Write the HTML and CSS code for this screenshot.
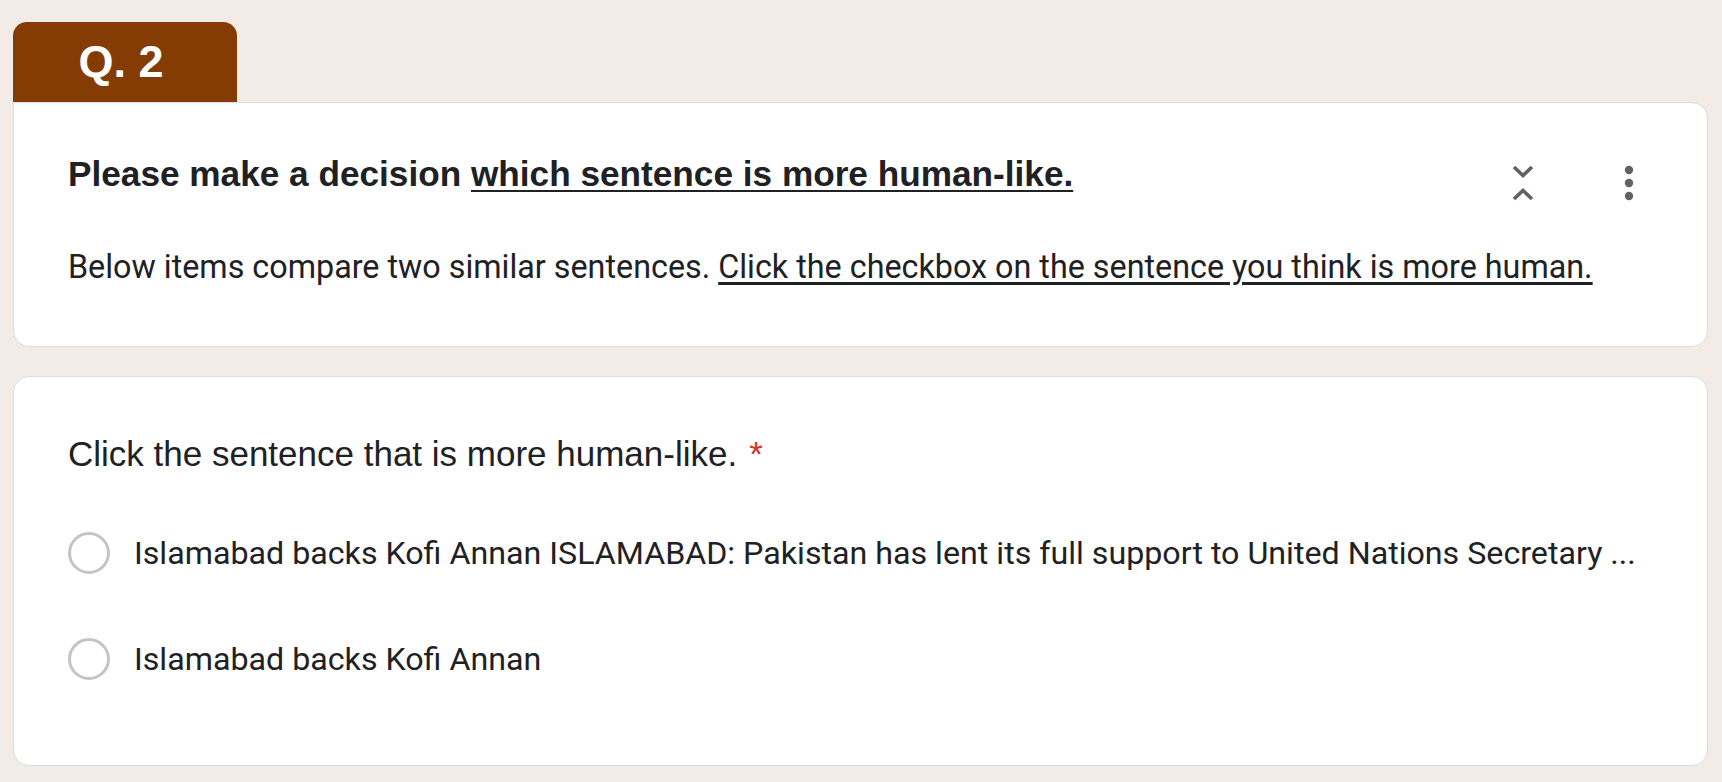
FILE: index.html
```html
<!DOCTYPE html>
<html lang="en">
<head>
<meta charset="UTF-8">
<meta name="viewport" content="width=device-width, initial-scale=1.0">
<title>Q. 2</title>
<link rel="stylesheet" href="styles.css">
</head>
<body>

<div id="page">
    <div class="tab">Q. 2</div>

    <div class="card head_card">
        <div class="head_row">
            <h1 class="title">Please make a decision <u>which sentence is more human-like.</u></h1>
            <div class="icons">
                <!-- collapse -->
                <svg class="icon" width="40" height="40" viewBox="0 0 40 40">
                    <polyline points="11,4 20,12.5 29,4" fill="none" stroke="#5f6368" stroke-width="3.6" />
                    <polyline points="11,36 20,27.5 29,36" fill="none" stroke="#5f6368" stroke-width="3.6" />
                </svg>
                <!-- more -->
                <svg class="icon" width="40" height="40" viewBox="0 0 40 40">
                    <circle cx="20" cy="7" r="4.2" fill="#5f6368" />
                    <circle cx="20" cy="20" r="4.2" fill="#5f6368" />
                    <circle cx="20" cy="33" r="4.2" fill="#5f6368" />
                </svg>
            </div>
        </div>
        <p class="desc">Below items compare two similar sentences. <u>Click the checkbox on the sentence you think is more human.</u></p>
    </div>

    <div class="card question_card">
        <div class="question">Click the sentence that is more human-like.<span class="req">*</span></div>
        <ul class="options">
            <li><span class="radio"></span>Islamabad backs Kofi Annan ISLAMABAD: Pakistan has lent its full support to United Nations Secretary ...</li>
            <li><span class="radio"></span>Islamabad backs Kofi Annan</li>
        </ul>
    </div>
</div>

</body>
</html>
```

FILE: styles.css
```css
body {
    margin: 0;
    background-color: #f2ebe6;
    color: #202124;
}
#page {
    padding: 22px 14px 19px 13px;
}
.tab {
    width: 224px;
    height: 80px;
    box-sizing: border-box;
    padding-right: 8px;
    background-color: #843c04;
    border-radius: 14px 14px 0 0;
    color: #fff;
    font-family: "Liberation Sans", Arial, sans-serif;
    font-weight: bold;
    font-size: 45px;
    display: flex;
    align-items: center;
    justify-content: center;
}
.card {
    background-color: #fff;
    border: 1px solid #dadce0;
    border-radius: 16px;
}
.head_card {
    border-top-left-radius: 0;
    padding: 51px 58px 59px 54px;
}
.head_row {
    display: flex;
    align-items: flex-start;
}
.title {
    flex: 1;
    margin: 0;
    font-family: "Liberation Sans", Arial, sans-serif;
    font-weight: bold;
    font-size: 35.2px;
    line-height: 40px;
}
.title u {
    text-decoration-thickness: 2px;
    text-underline-offset: 4px;
}
.icons {
    display: flex;
    gap: 66px;
    margin-top: 9px;
}
.desc {
    margin: 44px 0 0 0;
    font-family: Roboto, "Noto Sans", sans-serif;
    font-size: 32.3px;
    line-height: 40px;
}
.desc u {
    text-underline-offset: 4px;
}
.question_card {
    margin-top: 29px;
    padding: 57px 54px 76px 54px;
}
.question {
    font-family: "Liberation Sans", Arial, sans-serif;
    font-size: 35px;
    line-height: 40px;
}
.req {
    color: #d93025;
    padding-left: 12px;
}
.options {
    list-style: none;
    margin: 49px 0 0 0;
    padding: 0;
    display: flex;
    flex-direction: column;
    gap: 46px;
}
.options li {
    height: 60px;
    display: flex;
    align-items: center;
    font-family: Roboto, "Noto Sans", sans-serif;
    font-size: 32.2px;
    line-height: 40px;
}
.radio {
    width: 36px;
    height: 36px;
    border: 3px solid #c4c4c4;
    border-radius: 50%;
    margin-right: 24px;
    flex-shrink: 0;
}
```
